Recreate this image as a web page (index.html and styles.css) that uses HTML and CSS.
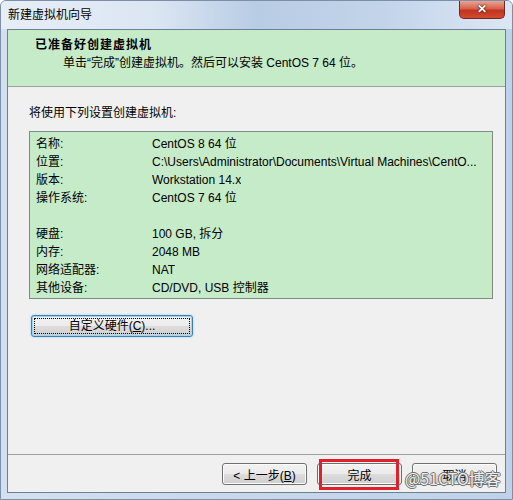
FILE: index.html
```html
<!doctype html>
<html>
	<head>
		<meta charset="utf-8" />
		<title>新建虚拟机向导</title>
		<link rel="stylesheet" href="styles.css">
	</head>
	<body>
		<div class="window">
			<div class="titlebar">
				<span class="title">新建虚拟机向导</span>
				<span class="close">&#x2715;</span>
			</div>
			<div class="client">
				<div class="header">
					<div class="headtitle">已准备好创建虚拟机</div>
					<div class="headsub">单击“完成”创建虚拟机。然后可以安装 CentOS 7 64 位。</div>
				</div>
				<div class="content">
					<p class="intro">将使用下列设置创建虚拟机:</p>
					<div class="summary">
						<div class="row"><span class="key">名称:</span><span class="val">CentOS 8 64 位</span></div>
						<div class="row"><span class="key">位置:</span><span class="val">C:\Users\Administrator\Documents\Virtual Machines\CentO...</span></div>
						<div class="row"><span class="key">版本:</span><span class="val">Workstation 14.x</span></div>
						<div class="row"><span class="key">操作系统:</span><span class="val">CentOS 7 64 位</span></div>
						<div class="row"></div>
						<div class="row"><span class="key">硬盘:</span><span class="val">100 GB, 拆分</span></div>
						<div class="row"><span class="key">内存:</span><span class="val">2048 MB</span></div>
						<div class="row"><span class="key">网络适配器:</span><span class="val">NAT</span></div>
						<div class="row"><span class="key">其他设备:</span><span class="val">CD/DVD, USB 控制器</span></div>
					</div>
					<button class="btn custom"><span class="focus">自定义硬件(<u>C</u>)...</span></button>
				</div>
				<div class="footer">
					<button class="btn">&lt; 上一步(<u>B</u>)</button>
					<button class="btn marked">完成</button>
					<button class="btn">取消</button>
				</div>
			</div>
			<div class="watermark">@51CTO博客</div>
		</div>
	</body>
</html>
```

FILE: styles.css
```css
body {
	margin: 0;
	font-family: "Liberation Sans", "Noto Sans CJK SC", sans-serif;
	font-size: 12px;
	color: #000;
}
.window {
	position: relative;
	width: 513px;
	height: 500px;
	box-sizing: border-box;
	background: linear-gradient(90deg, #d3e0ef 0%, #c9d9ec 40%, #bfd2e9 100%);
	border: 1px solid #7d8fa6;
	border-radius: 6px 6px 0 0;
	overflow: hidden;
}
.titlebar {
	display: flex;
	align-items: flex-start;
	height: 28px;
	background: linear-gradient(90deg, #e7eef7 0%, #dbe6f3 30%, #b8cce4 50%, #c3d4ea 75%, #dce7f4 100%);
}
.title {
	padding: 6px 0 0 7px;
	line-height: 16px;
	color: #000;
}
.close {
	margin-left: auto;
	margin-right: 7px;
	width: 46px;
	height: 18px;
	box-sizing: border-box;
	border: 1px solid #6d2a20;
	border-top: none;
	border-radius: 0 0 5px 5px;
	background: linear-gradient(#e9a593 0%, #d7624c 45%, #c2341f 55%, #d04b32 100%);
	color: #fff;
	font-weight: bold;
	font-size: 12px;
	line-height: 16px;
	text-align: center;
	text-shadow: 0 0 2px #3a0c05, 0 0 1px #3a0c05;
}
.client {
	display: flex;
	flex-direction: column;
	margin-left: 6px;
	width: 499px;
	height: 464px;
	box-sizing: border-box;
	border: 1px solid #6f7f93;
	background-color: #f0f0f0;
}
.header {
	height: 57px;
	box-sizing: border-box;
	padding: 6px 0 0 27px;
	background-color: #c6ebc9;
	border-bottom: 1px solid #a0a0a0;
	line-height: 18px;
}
.headtitle {
	font-weight: bold;
	letter-spacing: 1px;
}
.headsub {
	padding-left: 28px;
}
.content {
	flex: 1;
	padding: 17px 12px 0 21px;
}
.intro {
	margin: 0 0 9px 0;
	line-height: 18px;
}
.summary {
	height: 168px;
	box-sizing: border-box;
	padding: 3px 6px 0 6px;
	background-color: #c6ebc9;
	border: 1px solid #7e8c84;
}
.row {
	display: flex;
	height: 18px;
	line-height: 18px;
	white-space: nowrap;
}
.key {
	width: 116px;
	flex: none;
}
.val {
	overflow: hidden;
}
.btn {
	position: relative;
	width: 85px;
	height: 22px;
	padding: 0;
	font-family: inherit;
	font-size: 12px;
	color: #000;
	border: 1px solid #707070;
	border-radius: 3px;
	background: linear-gradient(#f2f2f2 0%, #ebebeb 50%, #dddddd 50%, #cfcfcf 100%);
	box-shadow: inset 0 0 0 1px #fcfcfc;
}
.btn u {
	text-decoration: underline;
}
.custom {
	display: flex;
	margin: 16px 0 0 2px;
	width: 162px;
	padding: 2px;
	border-color: #3c7fb1;
	box-shadow: inset 0 0 0 1px #9fd5f3, 0 0 2px #7fc4ea;
}
.focus {
	flex: 1;
	border: 1px dotted #000;
	line-height: 14px;
}
.footer {
	display: flex;
	justify-content: flex-end;
	gap: 10px;
	padding: 8px 8px 0 0;
	height: 38px;
	box-sizing: border-box;
	border-top: 1px solid #a0a0a0;
}
.marked::after {
	content: "";
	position: absolute;
	left: 1px;
	right: 2px;
	top: -5px;
	bottom: -6px;
	border: 3px solid #e0202a;
}
.watermark {
	position: absolute;
	left: 404px;
	top: 467px;
	font-family: "Noto Sans CJK SC", sans-serif;
	font-size: 16px;
	line-height: 20px;
	color: rgba(255, 255, 255, 0.9);
	text-shadow: 1px 0 0 #707070, -1px 0 0 #707070, 0 1px 0 #707070, 0 -1px 0 #707070;
}
```
